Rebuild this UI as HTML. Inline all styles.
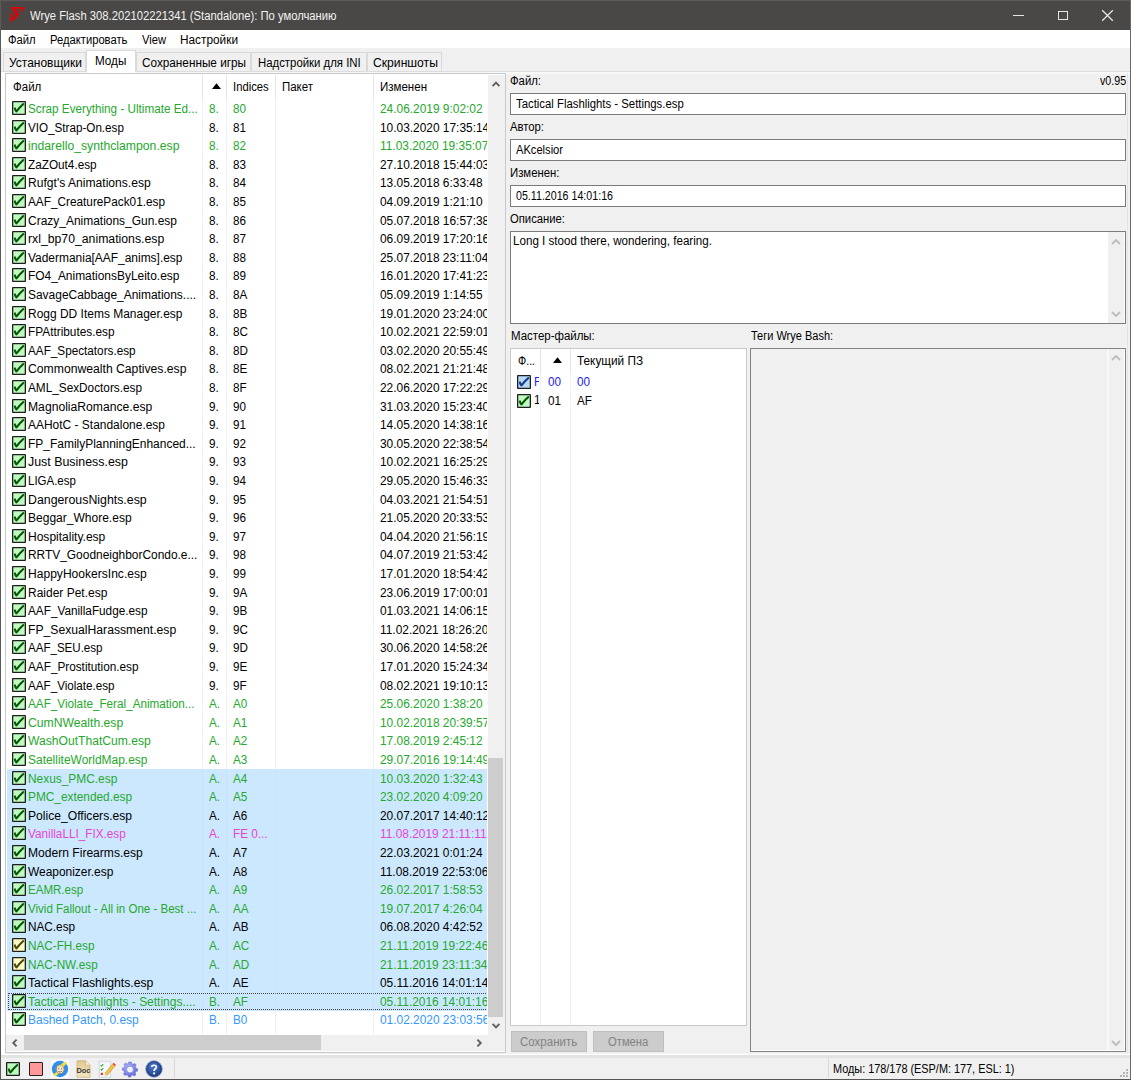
<!DOCTYPE html><html><head><meta charset="utf-8"><style>
*{margin:0;padding:0}
html,body{width:1131px;height:1080px;overflow:hidden;background:#f0f0f0}
body{position:relative;font-family:"Liberation Sans",sans-serif}
div,span,svg{position:absolute}
.t{white-space:pre;transform-origin:0 0;display:block}
.r{font-size:12.5px;line-height:14px;transform:scaleX(0.935)}
.d{transform:scaleX(0.952)}
.c1{width:16.3px;overflow:hidden}
</style></head><body><div style="left:0px;top:0px;width:1131px;height:30px;background:#4a4846;"></div>
<div style="left:0px;top:0px;width:1131px;height:1px;background:#5c5a58;"></div>
<svg style="position:absolute;left:6px;top:4px" width="22" height="22" viewBox="0 0 22 22">
<path d="M5.2 3.1 L17.8 3.0 Q18.7 3.5 18 5.4 L15.4 7.9 L14.4 7.6 L15.3 4.8 L9.8 4.8 L12.9 9.6 Q13.5 11.2 12.2 12.4 L5.6 17.9 L4.5 17 L4.5 9.1 L5.5 8.8 L7.3 12.6 Q8.1 13.6 9.1 12.9 Q9.9 12 9.2 10.9 L6.3 5.3 L5.1 4.4 Z" fill="#d40808"/></svg>
<span id="t0" class="t " style="left:29.5px;top:9.84px;font-size:12px;line-height:13.8px;color:#f2f2f2;transform:scaleX(0.9370);">Wrye Flash 308.202102221341 (Standalone): По умолчанию</span>
<div style="left:1013px;top:14.5px;width:11px;height:1.2px;background:#e6e6e6;"></div>
<div style="left:1057.5px;top:10.5px;width:10px;height:9.5px;border:1.2px solid #e6e6e6;box-sizing:border-box;"></div>
<svg style="position:absolute;left:1101px;top:9px" width="13" height="13" viewBox="0 0 13 13"><path d="M1.2 1.2 L11.8 11.8 M11.8 1.2 L1.2 11.8" stroke="#e6e6e6" stroke-width="1.3"/></svg>
<div style="left:0px;top:0px;width:1px;height:1080px;background:#5a5a5a;"></div>
<div style="left:1130px;top:0px;width:1px;height:1080px;background:#6a6a6a;"></div>
<div style="left:0px;top:1079px;width:1131px;height:1px;background:#555555;"></div>
<div style="left:1px;top:30px;width:1129px;height:18px;background:#fff;"></div>
<span id="t1" class="t " style="left:8.4px;top:34.34px;font-size:12px;line-height:13.8px;color:#000;transform:scaleX(0.9351);">Файл</span>
<span id="t2" class="t " style="left:50.4px;top:34.34px;font-size:12px;line-height:13.8px;color:#000;transform:scaleX(0.9336);">Редактировать</span>
<span id="t3" class="t " style="left:142px;top:34.34px;font-size:12px;line-height:13.8px;color:#000;transform:scaleX(0.9303);">View</span>
<span id="t4" class="t " style="left:180px;top:34.34px;font-size:12px;line-height:13.8px;color:#000;transform:scaleX(0.9857);">Настройки</span>
<div style="left:1px;top:48px;width:1129px;height:1030px;background:#f0f0f0;"></div>
<div style="left:3px;top:52px;width:83px;height:19px;background:#f0f0f0;border:1px solid #d9d9d9;border-bottom:none;box-sizing:border-box;"></div>
<span id="t5" class="t " style="left:8.8px;top:56.94px;font-size:12px;line-height:13.8px;color:#000;transform:scaleX(0.9991);">Установщики</span>
<div style="left:136px;top:52px;width:115.4px;height:19px;background:#f0f0f0;border:1px solid #d9d9d9;border-bottom:none;box-sizing:border-box;"></div>
<span id="t6" class="t " style="left:141.6px;top:56.94px;font-size:12px;line-height:13.8px;color:#000;transform:scaleX(0.9800);">Сохраненные игры</span>
<div style="left:251.4px;top:52px;width:115.29999999999998px;height:19px;background:#f0f0f0;border:1px solid #d9d9d9;border-bottom:none;box-sizing:border-box;"></div>
<span id="t7" class="t " style="left:257.5px;top:56.94px;font-size:12px;line-height:13.8px;color:#000;transform:scaleX(0.9478);">Надстройки для INI</span>
<div style="left:366.7px;top:52px;width:75.30000000000001px;height:19px;background:#f0f0f0;border:1px solid #d9d9d9;border-bottom:none;box-sizing:border-box;"></div>
<span id="t8" class="t " style="left:373px;top:56.94px;font-size:12px;line-height:13.8px;color:#000;transform:scaleX(1.0128);">Скриншоты</span>
<div style="left:1px;top:71px;width:1129px;height:1px;background:#dcdcdc;"></div>
<div style="left:1px;top:72px;width:1129px;height:1.5px;background:#f8f8f8;"></div>
<div style="left:1px;top:72px;width:4px;height:982px;background:#fff;"></div>
<div style="left:86px;top:50px;width:50px;height:22px;background:#fff;border:1px solid #d9d9d9;border-bottom:none;box-sizing:border-box;"></div>
<div style="left:87px;top:71px;width:48px;height:2px;background:#fff;"></div>
<span id="t9" class="t " style="left:94.7px;top:54.94px;font-size:12px;line-height:13.8px;color:#000;transform:scaleX(0.9729);">Моды</span>
<div style="left:5px;top:73px;width:501px;height:979.5px;background:#fff;border:1px solid #c8c9ce;box-sizing:border-box;"></div>
<div style="left:202.4px;top:74.5px;width:1px;height:24.5px;background:#e5e5e5;"></div>
<div style="left:226.3px;top:74.5px;width:1px;height:24.5px;background:#e5e5e5;"></div>
<div style="left:275.3px;top:74.5px;width:1px;height:24.5px;background:#e5e5e5;"></div>
<div style="left:373.2px;top:74.5px;width:1px;height:24.5px;background:#e5e5e5;"></div>
<span id="t10" class="t " style="left:12.9px;top:80.64px;font-size:12px;line-height:13.8px;color:#000;transform:scaleX(0.9588);">Файл</span>
<svg style="position:absolute;left:211px;top:82px" width="11" height="8" viewBox="0 0 11 8"><path d="M1 7 L5.5 1.2 L10 7 Z" fill="#000"/></svg>
<span id="t11" class="t " style="left:233px;top:80.64px;font-size:12px;line-height:13.8px;color:#000;transform:scaleX(0.9387);">Indices</span>
<span id="t12" class="t " style="left:282px;top:80.64px;font-size:12px;line-height:13.8px;color:#000;transform:scaleX(0.9548);">Пакет</span>
<span id="t13" class="t " style="left:380px;top:80.64px;font-size:12px;line-height:13.8px;color:#000;transform:scaleX(0.9595);">Изменен</span>
<div style="left:6px;top:99px;width:481px;height:935px;overflow:hidden;">
<svg style="position:absolute;left:6px;top:2.00px" width="14" height="14" viewBox="0 0 14 14"><rect x="0.65" y="0.65" width="12.7" height="12.7" rx="0.3" fill="#c0fac0" stroke="#1e1e1e" stroke-width="1.3"/><path d="M2.9 7.4 Q3.4 9.4 4.5 10.4 Q7.5 6.6 11.3 3.1" fill="none" stroke="#005800" stroke-width="2.1" stroke-linecap="round" stroke-linejoin="round"/></svg>
<span id="t14" class="t r" style="left:22.3px;top:3.07px;color:#25a82d;transform:scaleX(0.9364);">Scrap Everything - Ultimate Ed...</span>
<span id="t15" class="t r c1" style="left:202.6px;top:3.07px;color:#25a82d;">8.</span>
<span id="t16" class="t r" style="left:226.8px;top:3.07px;color:#25a82d;">80</span>
<span id="t17" class="t r d" style="left:374px;top:3.07px;color:#25a82d;">24.06.2019 9:02:02</span>
<svg style="position:absolute;left:6px;top:20.60px" width="14" height="14" viewBox="0 0 14 14"><rect x="0.65" y="0.65" width="12.7" height="12.7" rx="0.3" fill="#c0fac0" stroke="#1e1e1e" stroke-width="1.3"/><path d="M2.9 7.4 Q3.4 9.4 4.5 10.4 Q7.5 6.6 11.3 3.1" fill="none" stroke="#005800" stroke-width="2.1" stroke-linecap="round" stroke-linejoin="round"/></svg>
<span id="t18" class="t r" style="left:22.3px;top:21.67px;color:#000;transform:scaleX(0.9326);">VIO_Strap-On.esp</span>
<span id="t19" class="t r c1" style="left:202.6px;top:21.67px;color:#000;">8.</span>
<span id="t20" class="t r" style="left:226.8px;top:21.67px;color:#000;">81</span>
<span id="t21" class="t r d" style="left:374px;top:21.67px;color:#000;">10.03.2020 17:35:14</span>
<svg style="position:absolute;left:6px;top:39.20px" width="14" height="14" viewBox="0 0 14 14"><rect x="0.65" y="0.65" width="12.7" height="12.7" rx="0.3" fill="#c0fac0" stroke="#1e1e1e" stroke-width="1.3"/><path d="M2.9 7.4 Q3.4 9.4 4.5 10.4 Q7.5 6.6 11.3 3.1" fill="none" stroke="#005800" stroke-width="2.1" stroke-linecap="round" stroke-linejoin="round"/></svg>
<span id="t22" class="t r" style="left:22.3px;top:40.27px;color:#25a82d;transform:scaleX(0.9776);">indarello_synthclampon.esp</span>
<span id="t23" class="t r c1" style="left:202.6px;top:40.27px;color:#25a82d;">8.</span>
<span id="t24" class="t r" style="left:226.8px;top:40.27px;color:#25a82d;">82</span>
<span id="t25" class="t r d" style="left:374px;top:40.27px;color:#25a82d;">11.03.2020 19:35:07</span>
<svg style="position:absolute;left:6px;top:57.80px" width="14" height="14" viewBox="0 0 14 14"><rect x="0.65" y="0.65" width="12.7" height="12.7" rx="0.3" fill="#c0fac0" stroke="#1e1e1e" stroke-width="1.3"/><path d="M2.9 7.4 Q3.4 9.4 4.5 10.4 Q7.5 6.6 11.3 3.1" fill="none" stroke="#005800" stroke-width="2.1" stroke-linecap="round" stroke-linejoin="round"/></svg>
<span id="t26" class="t r" style="left:22.3px;top:58.87px;color:#000;transform:scaleX(0.9403);">ZaZOut4.esp</span>
<span id="t27" class="t r c1" style="left:202.6px;top:58.87px;color:#000;">8.</span>
<span id="t28" class="t r" style="left:226.8px;top:58.87px;color:#000;">83</span>
<span id="t29" class="t r d" style="left:374px;top:58.87px;color:#000;">27.10.2018 15:44:03</span>
<svg style="position:absolute;left:6px;top:76.40px" width="14" height="14" viewBox="0 0 14 14"><rect x="0.65" y="0.65" width="12.7" height="12.7" rx="0.3" fill="#c0fac0" stroke="#1e1e1e" stroke-width="1.3"/><path d="M2.9 7.4 Q3.4 9.4 4.5 10.4 Q7.5 6.6 11.3 3.1" fill="none" stroke="#005800" stroke-width="2.1" stroke-linecap="round" stroke-linejoin="round"/></svg>
<span id="t30" class="t r" style="left:22.3px;top:77.47px;color:#000;transform:scaleX(0.9679);">Rufgt&#x27;s Animations.esp</span>
<span id="t31" class="t r c1" style="left:202.6px;top:77.47px;color:#000;">8.</span>
<span id="t32" class="t r" style="left:226.8px;top:77.47px;color:#000;">84</span>
<span id="t33" class="t r d" style="left:374px;top:77.47px;color:#000;">13.05.2018 6:33:48</span>
<svg style="position:absolute;left:6px;top:95.00px" width="14" height="14" viewBox="0 0 14 14"><rect x="0.65" y="0.65" width="12.7" height="12.7" rx="0.3" fill="#c0fac0" stroke="#1e1e1e" stroke-width="1.3"/><path d="M2.9 7.4 Q3.4 9.4 4.5 10.4 Q7.5 6.6 11.3 3.1" fill="none" stroke="#005800" stroke-width="2.1" stroke-linecap="round" stroke-linejoin="round"/></svg>
<span id="t34" class="t r" style="left:22.3px;top:96.07px;color:#000;transform:scaleX(0.9434);">AAF_CreaturePack01.esp</span>
<span id="t35" class="t r c1" style="left:202.6px;top:96.07px;color:#000;">8.</span>
<span id="t36" class="t r" style="left:226.8px;top:96.07px;color:#000;">85</span>
<span id="t37" class="t r d" style="left:374px;top:96.07px;color:#000;">04.09.2019 1:21:10</span>
<svg style="position:absolute;left:6px;top:113.60px" width="14" height="14" viewBox="0 0 14 14"><rect x="0.65" y="0.65" width="12.7" height="12.7" rx="0.3" fill="#c0fac0" stroke="#1e1e1e" stroke-width="1.3"/><path d="M2.9 7.4 Q3.4 9.4 4.5 10.4 Q7.5 6.6 11.3 3.1" fill="none" stroke="#005800" stroke-width="2.1" stroke-linecap="round" stroke-linejoin="round"/></svg>
<span id="t38" class="t r" style="left:22.3px;top:114.67px;color:#000;transform:scaleX(0.9573);">Crazy_Animations_Gun.esp</span>
<span id="t39" class="t r c1" style="left:202.6px;top:114.67px;color:#000;">8.</span>
<span id="t40" class="t r" style="left:226.8px;top:114.67px;color:#000;">86</span>
<span id="t41" class="t r d" style="left:374px;top:114.67px;color:#000;">05.07.2018 16:57:38</span>
<svg style="position:absolute;left:6px;top:132.20px" width="14" height="14" viewBox="0 0 14 14"><rect x="0.65" y="0.65" width="12.7" height="12.7" rx="0.3" fill="#c0fac0" stroke="#1e1e1e" stroke-width="1.3"/><path d="M2.9 7.4 Q3.4 9.4 4.5 10.4 Q7.5 6.6 11.3 3.1" fill="none" stroke="#005800" stroke-width="2.1" stroke-linecap="round" stroke-linejoin="round"/></svg>
<span id="t42" class="t r" style="left:22.3px;top:133.27px;color:#000;transform:scaleX(0.9800);">rxl_bp70_animations.esp</span>
<span id="t43" class="t r c1" style="left:202.6px;top:133.27px;color:#000;">8.</span>
<span id="t44" class="t r" style="left:226.8px;top:133.27px;color:#000;">87</span>
<span id="t45" class="t r d" style="left:374px;top:133.27px;color:#000;">06.09.2019 17:20:16</span>
<svg style="position:absolute;left:6px;top:150.80px" width="14" height="14" viewBox="0 0 14 14"><rect x="0.65" y="0.65" width="12.7" height="12.7" rx="0.3" fill="#c0fac0" stroke="#1e1e1e" stroke-width="1.3"/><path d="M2.9 7.4 Q3.4 9.4 4.5 10.4 Q7.5 6.6 11.3 3.1" fill="none" stroke="#005800" stroke-width="2.1" stroke-linecap="round" stroke-linejoin="round"/></svg>
<span id="t46" class="t r" style="left:22.3px;top:151.87px;color:#000;transform:scaleX(0.9557);">Vadermania[AAF_anims].esp</span>
<span id="t47" class="t r c1" style="left:202.6px;top:151.87px;color:#000;">8.</span>
<span id="t48" class="t r" style="left:226.8px;top:151.87px;color:#000;">88</span>
<span id="t49" class="t r d" style="left:374px;top:151.87px;color:#000;">25.07.2018 23:11:04</span>
<svg style="position:absolute;left:6px;top:169.40px" width="14" height="14" viewBox="0 0 14 14"><rect x="0.65" y="0.65" width="12.7" height="12.7" rx="0.3" fill="#c0fac0" stroke="#1e1e1e" stroke-width="1.3"/><path d="M2.9 7.4 Q3.4 9.4 4.5 10.4 Q7.5 6.6 11.3 3.1" fill="none" stroke="#005800" stroke-width="2.1" stroke-linecap="round" stroke-linejoin="round"/></svg>
<span id="t50" class="t r" style="left:22.3px;top:170.47px;color:#000;transform:scaleX(0.9557);">FO4_AnimationsByLeito.esp</span>
<span id="t51" class="t r c1" style="left:202.6px;top:170.47px;color:#000;">8.</span>
<span id="t52" class="t r" style="left:226.8px;top:170.47px;color:#000;">89</span>
<span id="t53" class="t r d" style="left:374px;top:170.47px;color:#000;">16.01.2020 17:41:23</span>
<svg style="position:absolute;left:6px;top:188.00px" width="14" height="14" viewBox="0 0 14 14"><rect x="0.65" y="0.65" width="12.7" height="12.7" rx="0.3" fill="#c0fac0" stroke="#1e1e1e" stroke-width="1.3"/><path d="M2.9 7.4 Q3.4 9.4 4.5 10.4 Q7.5 6.6 11.3 3.1" fill="none" stroke="#005800" stroke-width="2.1" stroke-linecap="round" stroke-linejoin="round"/></svg>
<span id="t54" class="t r" style="left:22.3px;top:189.07px;color:#000;transform:scaleX(0.9561);">SavageCabbage_Animations....</span>
<span id="t55" class="t r c1" style="left:202.6px;top:189.07px;color:#000;">8.</span>
<span id="t56" class="t r" style="left:226.8px;top:189.07px;color:#000;">8A</span>
<span id="t57" class="t r d" style="left:374px;top:189.07px;color:#000;">05.09.2019 1:14:55</span>
<svg style="position:absolute;left:6px;top:206.60px" width="14" height="14" viewBox="0 0 14 14"><rect x="0.65" y="0.65" width="12.7" height="12.7" rx="0.3" fill="#c0fac0" stroke="#1e1e1e" stroke-width="1.3"/><path d="M2.9 7.4 Q3.4 9.4 4.5 10.4 Q7.5 6.6 11.3 3.1" fill="none" stroke="#005800" stroke-width="2.1" stroke-linecap="round" stroke-linejoin="round"/></svg>
<span id="t58" class="t r" style="left:22.3px;top:207.67px;color:#000;transform:scaleX(0.9584);">Rogg DD Items Manager.esp</span>
<span id="t59" class="t r c1" style="left:202.6px;top:207.67px;color:#000;">8.</span>
<span id="t60" class="t r" style="left:226.8px;top:207.67px;color:#000;">8B</span>
<span id="t61" class="t r d" style="left:374px;top:207.67px;color:#000;">19.01.2020 23:24:00</span>
<svg style="position:absolute;left:6px;top:225.20px" width="14" height="14" viewBox="0 0 14 14"><rect x="0.65" y="0.65" width="12.7" height="12.7" rx="0.3" fill="#c0fac0" stroke="#1e1e1e" stroke-width="1.3"/><path d="M2.9 7.4 Q3.4 9.4 4.5 10.4 Q7.5 6.6 11.3 3.1" fill="none" stroke="#005800" stroke-width="2.1" stroke-linecap="round" stroke-linejoin="round"/></svg>
<span id="t62" class="t r" style="left:22.3px;top:226.27px;color:#000;transform:scaleX(0.9466);">FPAttributes.esp</span>
<span id="t63" class="t r c1" style="left:202.6px;top:226.27px;color:#000;">8.</span>
<span id="t64" class="t r" style="left:226.8px;top:226.27px;color:#000;">8C</span>
<span id="t65" class="t r d" style="left:374px;top:226.27px;color:#000;">10.02.2021 22:59:01</span>
<svg style="position:absolute;left:6px;top:243.80px" width="14" height="14" viewBox="0 0 14 14"><rect x="0.65" y="0.65" width="12.7" height="12.7" rx="0.3" fill="#c0fac0" stroke="#1e1e1e" stroke-width="1.3"/><path d="M2.9 7.4 Q3.4 9.4 4.5 10.4 Q7.5 6.6 11.3 3.1" fill="none" stroke="#005800" stroke-width="2.1" stroke-linecap="round" stroke-linejoin="round"/></svg>
<span id="t66" class="t r" style="left:22.3px;top:244.87px;color:#000;transform:scaleX(0.9385);">AAF_Spectators.esp</span>
<span id="t67" class="t r c1" style="left:202.6px;top:244.87px;color:#000;">8.</span>
<span id="t68" class="t r" style="left:226.8px;top:244.87px;color:#000;">8D</span>
<span id="t69" class="t r d" style="left:374px;top:244.87px;color:#000;">03.02.2020 20:55:49</span>
<svg style="position:absolute;left:6px;top:262.40px" width="14" height="14" viewBox="0 0 14 14"><rect x="0.65" y="0.65" width="12.7" height="12.7" rx="0.3" fill="#c0fac0" stroke="#1e1e1e" stroke-width="1.3"/><path d="M2.9 7.4 Q3.4 9.4 4.5 10.4 Q7.5 6.6 11.3 3.1" fill="none" stroke="#005800" stroke-width="2.1" stroke-linecap="round" stroke-linejoin="round"/></svg>
<span id="t70" class="t r" style="left:22.3px;top:263.47px;color:#000;transform:scaleX(0.9749);">Commonwealth Captives.esp</span>
<span id="t71" class="t r c1" style="left:202.6px;top:263.47px;color:#000;">8.</span>
<span id="t72" class="t r" style="left:226.8px;top:263.47px;color:#000;">8E</span>
<span id="t73" class="t r d" style="left:374px;top:263.47px;color:#000;">08.02.2021 21:21:48</span>
<svg style="position:absolute;left:6px;top:281.00px" width="14" height="14" viewBox="0 0 14 14"><rect x="0.65" y="0.65" width="12.7" height="12.7" rx="0.3" fill="#c0fac0" stroke="#1e1e1e" stroke-width="1.3"/><path d="M2.9 7.4 Q3.4 9.4 4.5 10.4 Q7.5 6.6 11.3 3.1" fill="none" stroke="#005800" stroke-width="2.1" stroke-linecap="round" stroke-linejoin="round"/></svg>
<span id="t74" class="t r" style="left:22.3px;top:282.07px;color:#000;transform:scaleX(0.9430);">AML_SexDoctors.esp</span>
<span id="t75" class="t r c1" style="left:202.6px;top:282.07px;color:#000;">8.</span>
<span id="t76" class="t r" style="left:226.8px;top:282.07px;color:#000;">8F</span>
<span id="t77" class="t r d" style="left:374px;top:282.07px;color:#000;">22.06.2020 17:22:29</span>
<svg style="position:absolute;left:6px;top:299.60px" width="14" height="14" viewBox="0 0 14 14"><rect x="0.65" y="0.65" width="12.7" height="12.7" rx="0.3" fill="#c0fac0" stroke="#1e1e1e" stroke-width="1.3"/><path d="M2.9 7.4 Q3.4 9.4 4.5 10.4 Q7.5 6.6 11.3 3.1" fill="none" stroke="#005800" stroke-width="2.1" stroke-linecap="round" stroke-linejoin="round"/></svg>
<span id="t78" class="t r" style="left:22.3px;top:300.67px;color:#000;transform:scaleX(0.9722);">MagnoliaRomance.esp</span>
<span id="t79" class="t r c1" style="left:202.6px;top:300.67px;color:#000;">9.</span>
<span id="t80" class="t r" style="left:226.8px;top:300.67px;color:#000;">90</span>
<span id="t81" class="t r d" style="left:374px;top:300.67px;color:#000;">31.03.2020 15:23:40</span>
<svg style="position:absolute;left:6px;top:318.20px" width="14" height="14" viewBox="0 0 14 14"><rect x="0.65" y="0.65" width="12.7" height="12.7" rx="0.3" fill="#c0fac0" stroke="#1e1e1e" stroke-width="1.3"/><path d="M2.9 7.4 Q3.4 9.4 4.5 10.4 Q7.5 6.6 11.3 3.1" fill="none" stroke="#005800" stroke-width="2.1" stroke-linecap="round" stroke-linejoin="round"/></svg>
<span id="t82" class="t r" style="left:22.3px;top:319.27px;color:#000;transform:scaleX(0.9571);">AAHotC - Standalone.esp</span>
<span id="t83" class="t r c1" style="left:202.6px;top:319.27px;color:#000;">9.</span>
<span id="t84" class="t r" style="left:226.8px;top:319.27px;color:#000;">91</span>
<span id="t85" class="t r d" style="left:374px;top:319.27px;color:#000;">14.05.2020 14:38:16</span>
<svg style="position:absolute;left:6px;top:336.80px" width="14" height="14" viewBox="0 0 14 14"><rect x="0.65" y="0.65" width="12.7" height="12.7" rx="0.3" fill="#c0fac0" stroke="#1e1e1e" stroke-width="1.3"/><path d="M2.9 7.4 Q3.4 9.4 4.5 10.4 Q7.5 6.6 11.3 3.1" fill="none" stroke="#005800" stroke-width="2.1" stroke-linecap="round" stroke-linejoin="round"/></svg>
<span id="t86" class="t r" style="left:22.3px;top:337.87px;color:#000;transform:scaleX(0.9577);">FP_FamilyPlanningEnhanced...</span>
<span id="t87" class="t r c1" style="left:202.6px;top:337.87px;color:#000;">9.</span>
<span id="t88" class="t r" style="left:226.8px;top:337.87px;color:#000;">92</span>
<span id="t89" class="t r d" style="left:374px;top:337.87px;color:#000;">30.05.2020 22:38:54</span>
<svg style="position:absolute;left:6px;top:355.40px" width="14" height="14" viewBox="0 0 14 14"><rect x="0.65" y="0.65" width="12.7" height="12.7" rx="0.3" fill="#c0fac0" stroke="#1e1e1e" stroke-width="1.3"/><path d="M2.9 7.4 Q3.4 9.4 4.5 10.4 Q7.5 6.6 11.3 3.1" fill="none" stroke="#005800" stroke-width="2.1" stroke-linecap="round" stroke-linejoin="round"/></svg>
<span id="t90" class="t r" style="left:22.3px;top:356.47px;color:#000;transform:scaleX(0.9916);">Just Business.esp</span>
<span id="t91" class="t r c1" style="left:202.6px;top:356.47px;color:#000;">9.</span>
<span id="t92" class="t r" style="left:226.8px;top:356.47px;color:#000;">93</span>
<span id="t93" class="t r d" style="left:374px;top:356.47px;color:#000;">10.02.2021 16:25:29</span>
<svg style="position:absolute;left:6px;top:374.00px" width="14" height="14" viewBox="0 0 14 14"><rect x="0.65" y="0.65" width="12.7" height="12.7" rx="0.3" fill="#c0fac0" stroke="#1e1e1e" stroke-width="1.3"/><path d="M2.9 7.4 Q3.4 9.4 4.5 10.4 Q7.5 6.6 11.3 3.1" fill="none" stroke="#005800" stroke-width="2.1" stroke-linecap="round" stroke-linejoin="round"/></svg>
<span id="t94" class="t r" style="left:22.3px;top:375.07px;color:#000;transform:scaleX(0.9189);">LIGA.esp</span>
<span id="t95" class="t r c1" style="left:202.6px;top:375.07px;color:#000;">9.</span>
<span id="t96" class="t r" style="left:226.8px;top:375.07px;color:#000;">94</span>
<span id="t97" class="t r d" style="left:374px;top:375.07px;color:#000;">29.05.2020 15:46:33</span>
<svg style="position:absolute;left:6px;top:392.60px" width="14" height="14" viewBox="0 0 14 14"><rect x="0.65" y="0.65" width="12.7" height="12.7" rx="0.3" fill="#c0fac0" stroke="#1e1e1e" stroke-width="1.3"/><path d="M2.9 7.4 Q3.4 9.4 4.5 10.4 Q7.5 6.6 11.3 3.1" fill="none" stroke="#005800" stroke-width="2.1" stroke-linecap="round" stroke-linejoin="round"/></svg>
<span id="t98" class="t r" style="left:22.3px;top:393.67px;color:#000;transform:scaleX(0.9874);">DangerousNights.esp</span>
<span id="t99" class="t r c1" style="left:202.6px;top:393.67px;color:#000;">9.</span>
<span id="t100" class="t r" style="left:226.8px;top:393.67px;color:#000;">95</span>
<span id="t101" class="t r d" style="left:374px;top:393.67px;color:#000;">04.03.2021 21:54:51</span>
<svg style="position:absolute;left:6px;top:411.20px" width="14" height="14" viewBox="0 0 14 14"><rect x="0.65" y="0.65" width="12.7" height="12.7" rx="0.3" fill="#c0fac0" stroke="#1e1e1e" stroke-width="1.3"/><path d="M2.9 7.4 Q3.4 9.4 4.5 10.4 Q7.5 6.6 11.3 3.1" fill="none" stroke="#005800" stroke-width="2.1" stroke-linecap="round" stroke-linejoin="round"/></svg>
<span id="t102" class="t r" style="left:22.3px;top:412.27px;color:#000;transform:scaleX(0.9619);">Beggar_Whore.esp</span>
<span id="t103" class="t r c1" style="left:202.6px;top:412.27px;color:#000;">9.</span>
<span id="t104" class="t r" style="left:226.8px;top:412.27px;color:#000;">96</span>
<span id="t105" class="t r d" style="left:374px;top:412.27px;color:#000;">21.05.2020 20:33:53</span>
<svg style="position:absolute;left:6px;top:429.80px" width="14" height="14" viewBox="0 0 14 14"><rect x="0.65" y="0.65" width="12.7" height="12.7" rx="0.3" fill="#c0fac0" stroke="#1e1e1e" stroke-width="1.3"/><path d="M2.9 7.4 Q3.4 9.4 4.5 10.4 Q7.5 6.6 11.3 3.1" fill="none" stroke="#005800" stroke-width="2.1" stroke-linecap="round" stroke-linejoin="round"/></svg>
<span id="t106" class="t r" style="left:22.3px;top:430.87px;color:#000;transform:scaleX(0.9619);">Hospitality.esp</span>
<span id="t107" class="t r c1" style="left:202.6px;top:430.87px;color:#000;">9.</span>
<span id="t108" class="t r" style="left:226.8px;top:430.87px;color:#000;">97</span>
<span id="t109" class="t r d" style="left:374px;top:430.87px;color:#000;">04.04.2020 21:56:19</span>
<svg style="position:absolute;left:6px;top:448.40px" width="14" height="14" viewBox="0 0 14 14"><rect x="0.65" y="0.65" width="12.7" height="12.7" rx="0.3" fill="#c0fac0" stroke="#1e1e1e" stroke-width="1.3"/><path d="M2.9 7.4 Q3.4 9.4 4.5 10.4 Q7.5 6.6 11.3 3.1" fill="none" stroke="#005800" stroke-width="2.1" stroke-linecap="round" stroke-linejoin="round"/></svg>
<span id="t110" class="t r" style="left:22.3px;top:449.47px;color:#000;transform:scaleX(0.9534);">RRTV_GoodneighborCondo.e...</span>
<span id="t111" class="t r c1" style="left:202.6px;top:449.47px;color:#000;">9.</span>
<span id="t112" class="t r" style="left:226.8px;top:449.47px;color:#000;">98</span>
<span id="t113" class="t r d" style="left:374px;top:449.47px;color:#000;">04.07.2019 21:53:42</span>
<svg style="position:absolute;left:6px;top:467.00px" width="14" height="14" viewBox="0 0 14 14"><rect x="0.65" y="0.65" width="12.7" height="12.7" rx="0.3" fill="#c0fac0" stroke="#1e1e1e" stroke-width="1.3"/><path d="M2.9 7.4 Q3.4 9.4 4.5 10.4 Q7.5 6.6 11.3 3.1" fill="none" stroke="#005800" stroke-width="2.1" stroke-linecap="round" stroke-linejoin="round"/></svg>
<span id="t114" class="t r" style="left:22.3px;top:468.07px;color:#000;transform:scaleX(0.9652);">HappyHookersInc.esp</span>
<span id="t115" class="t r c1" style="left:202.6px;top:468.07px;color:#000;">9.</span>
<span id="t116" class="t r" style="left:226.8px;top:468.07px;color:#000;">99</span>
<span id="t117" class="t r d" style="left:374px;top:468.07px;color:#000;">17.01.2020 18:54:42</span>
<svg style="position:absolute;left:6px;top:485.60px" width="14" height="14" viewBox="0 0 14 14"><rect x="0.65" y="0.65" width="12.7" height="12.7" rx="0.3" fill="#c0fac0" stroke="#1e1e1e" stroke-width="1.3"/><path d="M2.9 7.4 Q3.4 9.4 4.5 10.4 Q7.5 6.6 11.3 3.1" fill="none" stroke="#005800" stroke-width="2.1" stroke-linecap="round" stroke-linejoin="round"/></svg>
<span id="t118" class="t r" style="left:22.3px;top:486.67px;color:#000;transform:scaleX(0.9590);">Raider Pet.esp</span>
<span id="t119" class="t r c1" style="left:202.6px;top:486.67px;color:#000;">9.</span>
<span id="t120" class="t r" style="left:226.8px;top:486.67px;color:#000;">9A</span>
<span id="t121" class="t r d" style="left:374px;top:486.67px;color:#000;">23.06.2019 17:00:01</span>
<svg style="position:absolute;left:6px;top:504.20px" width="14" height="14" viewBox="0 0 14 14"><rect x="0.65" y="0.65" width="12.7" height="12.7" rx="0.3" fill="#c0fac0" stroke="#1e1e1e" stroke-width="1.3"/><path d="M2.9 7.4 Q3.4 9.4 4.5 10.4 Q7.5 6.6 11.3 3.1" fill="none" stroke="#005800" stroke-width="2.1" stroke-linecap="round" stroke-linejoin="round"/></svg>
<span id="t122" class="t r" style="left:22.3px;top:505.27px;color:#000;transform:scaleX(0.9414);">AAF_VanillaFudge.esp</span>
<span id="t123" class="t r c1" style="left:202.6px;top:505.27px;color:#000;">9.</span>
<span id="t124" class="t r" style="left:226.8px;top:505.27px;color:#000;">9B</span>
<span id="t125" class="t r d" style="left:374px;top:505.27px;color:#000;">01.03.2021 14:06:15</span>
<svg style="position:absolute;left:6px;top:522.80px" width="14" height="14" viewBox="0 0 14 14"><rect x="0.65" y="0.65" width="12.7" height="12.7" rx="0.3" fill="#c0fac0" stroke="#1e1e1e" stroke-width="1.3"/><path d="M2.9 7.4 Q3.4 9.4 4.5 10.4 Q7.5 6.6 11.3 3.1" fill="none" stroke="#005800" stroke-width="2.1" stroke-linecap="round" stroke-linejoin="round"/></svg>
<span id="t126" class="t r" style="left:22.3px;top:523.87px;color:#000;transform:scaleX(0.9740);">FP_SexualHarassment.esp</span>
<span id="t127" class="t r c1" style="left:202.6px;top:523.87px;color:#000;">9.</span>
<span id="t128" class="t r" style="left:226.8px;top:523.87px;color:#000;">9C</span>
<span id="t129" class="t r d" style="left:374px;top:523.87px;color:#000;">11.02.2021 18:26:20</span>
<svg style="position:absolute;left:6px;top:541.40px" width="14" height="14" viewBox="0 0 14 14"><rect x="0.65" y="0.65" width="12.7" height="12.7" rx="0.3" fill="#c0fac0" stroke="#1e1e1e" stroke-width="1.3"/><path d="M2.9 7.4 Q3.4 9.4 4.5 10.4 Q7.5 6.6 11.3 3.1" fill="none" stroke="#005800" stroke-width="2.1" stroke-linecap="round" stroke-linejoin="round"/></svg>
<span id="t130" class="t r" style="left:22.3px;top:542.47px;color:#000;transform:scaleX(0.9244);">AAF_SEU.esp</span>
<span id="t131" class="t r c1" style="left:202.6px;top:542.47px;color:#000;">9.</span>
<span id="t132" class="t r" style="left:226.8px;top:542.47px;color:#000;">9D</span>
<span id="t133" class="t r d" style="left:374px;top:542.47px;color:#000;">30.06.2020 14:58:26</span>
<svg style="position:absolute;left:6px;top:560.00px" width="14" height="14" viewBox="0 0 14 14"><rect x="0.65" y="0.65" width="12.7" height="12.7" rx="0.3" fill="#c0fac0" stroke="#1e1e1e" stroke-width="1.3"/><path d="M2.9 7.4 Q3.4 9.4 4.5 10.4 Q7.5 6.6 11.3 3.1" fill="none" stroke="#005800" stroke-width="2.1" stroke-linecap="round" stroke-linejoin="round"/></svg>
<span id="t134" class="t r" style="left:22.3px;top:561.07px;color:#000;transform:scaleX(0.9411);">AAF_Prostitution.esp</span>
<span id="t135" class="t r c1" style="left:202.6px;top:561.07px;color:#000;">9.</span>
<span id="t136" class="t r" style="left:226.8px;top:561.07px;color:#000;">9E</span>
<span id="t137" class="t r d" style="left:374px;top:561.07px;color:#000;">17.01.2020 15:24:34</span>
<svg style="position:absolute;left:6px;top:578.60px" width="14" height="14" viewBox="0 0 14 14"><rect x="0.65" y="0.65" width="12.7" height="12.7" rx="0.3" fill="#c0fac0" stroke="#1e1e1e" stroke-width="1.3"/><path d="M2.9 7.4 Q3.4 9.4 4.5 10.4 Q7.5 6.6 11.3 3.1" fill="none" stroke="#005800" stroke-width="2.1" stroke-linecap="round" stroke-linejoin="round"/></svg>
<span id="t138" class="t r" style="left:22.3px;top:579.67px;color:#000;transform:scaleX(0.9323);">AAF_Violate.esp</span>
<span id="t139" class="t r c1" style="left:202.6px;top:579.67px;color:#000;">9.</span>
<span id="t140" class="t r" style="left:226.8px;top:579.67px;color:#000;">9F</span>
<span id="t141" class="t r d" style="left:374px;top:579.67px;color:#000;">08.02.2021 19:10:13</span>
<svg style="position:absolute;left:6px;top:597.20px" width="14" height="14" viewBox="0 0 14 14"><rect x="0.65" y="0.65" width="12.7" height="12.7" rx="0.3" fill="#c0fac0" stroke="#1e1e1e" stroke-width="1.3"/><path d="M2.9 7.4 Q3.4 9.4 4.5 10.4 Q7.5 6.6 11.3 3.1" fill="none" stroke="#005800" stroke-width="2.1" stroke-linecap="round" stroke-linejoin="round"/></svg>
<span id="t142" class="t r" style="left:22.3px;top:598.27px;color:#25a82d;transform:scaleX(0.9372);">AAF_Violate_Feral_Animation...</span>
<span id="t143" class="t r c1" style="left:202.6px;top:598.27px;color:#25a82d;">A.</span>
<span id="t144" class="t r" style="left:226.8px;top:598.27px;color:#25a82d;">A0</span>
<span id="t145" class="t r d" style="left:374px;top:598.27px;color:#25a82d;">25.06.2020 1:38:20</span>
<svg style="position:absolute;left:6px;top:615.80px" width="14" height="14" viewBox="0 0 14 14"><rect x="0.65" y="0.65" width="12.7" height="12.7" rx="0.3" fill="#c0fac0" stroke="#1e1e1e" stroke-width="1.3"/><path d="M2.9 7.4 Q3.4 9.4 4.5 10.4 Q7.5 6.6 11.3 3.1" fill="none" stroke="#005800" stroke-width="2.1" stroke-linecap="round" stroke-linejoin="round"/></svg>
<span id="t146" class="t r" style="left:22.3px;top:616.87px;color:#25a82d;transform:scaleX(0.9741);">CumNWealth.esp</span>
<span id="t147" class="t r c1" style="left:202.6px;top:616.87px;color:#25a82d;">A.</span>
<span id="t148" class="t r" style="left:226.8px;top:616.87px;color:#25a82d;">A1</span>
<span id="t149" class="t r d" style="left:374px;top:616.87px;color:#25a82d;">10.02.2018 20:39:57</span>
<svg style="position:absolute;left:6px;top:634.40px" width="14" height="14" viewBox="0 0 14 14"><rect x="0.65" y="0.65" width="12.7" height="12.7" rx="0.3" fill="#c0fac0" stroke="#1e1e1e" stroke-width="1.3"/><path d="M2.9 7.4 Q3.4 9.4 4.5 10.4 Q7.5 6.6 11.3 3.1" fill="none" stroke="#005800" stroke-width="2.1" stroke-linecap="round" stroke-linejoin="round"/></svg>
<span id="t150" class="t r" style="left:22.3px;top:635.47px;color:#25a82d;transform:scaleX(0.9686);">WashOutThatCum.esp</span>
<span id="t151" class="t r c1" style="left:202.6px;top:635.47px;color:#25a82d;">A.</span>
<span id="t152" class="t r" style="left:226.8px;top:635.47px;color:#25a82d;">A2</span>
<span id="t153" class="t r d" style="left:374px;top:635.47px;color:#25a82d;">17.08.2019 2:45:12</span>
<svg style="position:absolute;left:6px;top:653.00px" width="14" height="14" viewBox="0 0 14 14"><rect x="0.65" y="0.65" width="12.7" height="12.7" rx="0.3" fill="#c0fac0" stroke="#1e1e1e" stroke-width="1.3"/><path d="M2.9 7.4 Q3.4 9.4 4.5 10.4 Q7.5 6.6 11.3 3.1" fill="none" stroke="#005800" stroke-width="2.1" stroke-linecap="round" stroke-linejoin="round"/></svg>
<span id="t154" class="t r" style="left:22.3px;top:654.07px;color:#25a82d;transform:scaleX(0.9572);">SatelliteWorldMap.esp</span>
<span id="t155" class="t r c1" style="left:202.6px;top:654.07px;color:#25a82d;">A.</span>
<span id="t156" class="t r" style="left:226.8px;top:654.07px;color:#25a82d;">A3</span>
<span id="t157" class="t r d" style="left:374px;top:654.07px;color:#25a82d;">29.07.2016 19:14:49</span>
<div style="left:1px;top:670.10px;width:481px;height:241.80px;background:#cce8ff;"></div>
<svg style="position:absolute;left:6px;top:671.60px" width="14" height="14" viewBox="0 0 14 14"><rect x="0.65" y="0.65" width="12.7" height="12.7" rx="0.3" fill="#c0fac0" stroke="#1e1e1e" stroke-width="1.3"/><path d="M2.9 7.4 Q3.4 9.4 4.5 10.4 Q7.5 6.6 11.3 3.1" fill="none" stroke="#005800" stroke-width="2.1" stroke-linecap="round" stroke-linejoin="round"/></svg>
<span id="t158" class="t r" style="left:22.3px;top:672.67px;color:#25a82d;transform:scaleX(0.9521);">Nexus_PMC.esp</span>
<span id="t159" class="t r c1" style="left:202.6px;top:672.67px;color:#25a82d;">A.</span>
<span id="t160" class="t r" style="left:226.8px;top:672.67px;color:#25a82d;">A4</span>
<span id="t161" class="t r d" style="left:374px;top:672.67px;color:#25a82d;">10.03.2020 1:32:43</span>
<svg style="position:absolute;left:6px;top:690.20px" width="14" height="14" viewBox="0 0 14 14"><rect x="0.65" y="0.65" width="12.7" height="12.7" rx="0.3" fill="#c0fac0" stroke="#1e1e1e" stroke-width="1.3"/><path d="M2.9 7.4 Q3.4 9.4 4.5 10.4 Q7.5 6.6 11.3 3.1" fill="none" stroke="#005800" stroke-width="2.1" stroke-linecap="round" stroke-linejoin="round"/></svg>
<span id="t162" class="t r" style="left:22.3px;top:691.27px;color:#25a82d;transform:scaleX(0.9481);">PMC_extended.esp</span>
<span id="t163" class="t r c1" style="left:202.6px;top:691.27px;color:#25a82d;">A.</span>
<span id="t164" class="t r" style="left:226.8px;top:691.27px;color:#25a82d;">A5</span>
<span id="t165" class="t r d" style="left:374px;top:691.27px;color:#25a82d;">23.02.2020 4:09:20</span>
<svg style="position:absolute;left:6px;top:708.80px" width="14" height="14" viewBox="0 0 14 14"><rect x="0.65" y="0.65" width="12.7" height="12.7" rx="0.3" fill="#c0fac0" stroke="#1e1e1e" stroke-width="1.3"/><path d="M2.9 7.4 Q3.4 9.4 4.5 10.4 Q7.5 6.6 11.3 3.1" fill="none" stroke="#005800" stroke-width="2.1" stroke-linecap="round" stroke-linejoin="round"/></svg>
<span id="t166" class="t r" style="left:22.3px;top:709.87px;color:#000;transform:scaleX(0.9687);">Police_Officers.esp</span>
<span id="t167" class="t r c1" style="left:202.6px;top:709.87px;color:#000;">A.</span>
<span id="t168" class="t r" style="left:226.8px;top:709.87px;color:#000;">A6</span>
<span id="t169" class="t r d" style="left:374px;top:709.87px;color:#000;">20.07.2017 14:40:12</span>
<svg style="position:absolute;left:6px;top:727.40px" width="14" height="14" viewBox="0 0 14 14"><rect x="0.65" y="0.65" width="12.7" height="12.7" rx="0.3" fill="#c0fac0" stroke="#1e1e1e" stroke-width="1.3"/><path d="M2.9 7.4 Q3.4 9.4 4.5 10.4 Q7.5 6.6 11.3 3.1" fill="none" stroke="#005800" stroke-width="2.1" stroke-linecap="round" stroke-linejoin="round"/></svg>
<span id="t170" class="t r" style="left:22.3px;top:728.47px;color:#e444d8;transform:scaleX(0.9394);">VanillaLLI_FIX.esp</span>
<span id="t171" class="t r c1" style="left:202.6px;top:728.47px;color:#e444d8;">A.</span>
<span id="t172" class="t r" style="left:226.8px;top:728.47px;color:#e444d8;">FE 0...</span>
<span id="t173" class="t r d" style="left:374px;top:728.47px;color:#e444d8;">11.08.2019 21:11:11</span>
<svg style="position:absolute;left:6px;top:746.00px" width="14" height="14" viewBox="0 0 14 14"><rect x="0.65" y="0.65" width="12.7" height="12.7" rx="0.3" fill="#c0fac0" stroke="#1e1e1e" stroke-width="1.3"/><path d="M2.9 7.4 Q3.4 9.4 4.5 10.4 Q7.5 6.6 11.3 3.1" fill="none" stroke="#005800" stroke-width="2.1" stroke-linecap="round" stroke-linejoin="round"/></svg>
<span id="t174" class="t r" style="left:22.3px;top:747.07px;color:#000;transform:scaleX(0.9664);">Modern Firearms.esp</span>
<span id="t175" class="t r c1" style="left:202.6px;top:747.07px;color:#000;">A.</span>
<span id="t176" class="t r" style="left:226.8px;top:747.07px;color:#000;">A7</span>
<span id="t177" class="t r d" style="left:374px;top:747.07px;color:#000;">22.03.2021 0:01:24</span>
<svg style="position:absolute;left:6px;top:764.60px" width="14" height="14" viewBox="0 0 14 14"><rect x="0.65" y="0.65" width="12.7" height="12.7" rx="0.3" fill="#c0fac0" stroke="#1e1e1e" stroke-width="1.3"/><path d="M2.9 7.4 Q3.4 9.4 4.5 10.4 Q7.5 6.6 11.3 3.1" fill="none" stroke="#005800" stroke-width="2.1" stroke-linecap="round" stroke-linejoin="round"/></svg>
<span id="t178" class="t r" style="left:22.3px;top:765.67px;color:#000;transform:scaleX(0.9539);">Weaponizer.esp</span>
<span id="t179" class="t r c1" style="left:202.6px;top:765.67px;color:#000;">A.</span>
<span id="t180" class="t r" style="left:226.8px;top:765.67px;color:#000;">A8</span>
<span id="t181" class="t r d" style="left:374px;top:765.67px;color:#000;">11.08.2019 22:53:06</span>
<svg style="position:absolute;left:6px;top:783.20px" width="14" height="14" viewBox="0 0 14 14"><rect x="0.65" y="0.65" width="12.7" height="12.7" rx="0.3" fill="#c0fac0" stroke="#1e1e1e" stroke-width="1.3"/><path d="M2.9 7.4 Q3.4 9.4 4.5 10.4 Q7.5 6.6 11.3 3.1" fill="none" stroke="#005800" stroke-width="2.1" stroke-linecap="round" stroke-linejoin="round"/></svg>
<span id="t182" class="t r" style="left:22.3px;top:784.27px;color:#25a82d;transform:scaleX(0.9222);">EAMR.esp</span>
<span id="t183" class="t r c1" style="left:202.6px;top:784.27px;color:#25a82d;">A.</span>
<span id="t184" class="t r" style="left:226.8px;top:784.27px;color:#25a82d;">A9</span>
<span id="t185" class="t r d" style="left:374px;top:784.27px;color:#25a82d;">26.02.2017 1:58:53</span>
<svg style="position:absolute;left:6px;top:801.80px" width="14" height="14" viewBox="0 0 14 14"><rect x="0.65" y="0.65" width="12.7" height="12.7" rx="0.3" fill="#c0fac0" stroke="#1e1e1e" stroke-width="1.3"/><path d="M2.9 7.4 Q3.4 9.4 4.5 10.4 Q7.5 6.6 11.3 3.1" fill="none" stroke="#005800" stroke-width="2.1" stroke-linecap="round" stroke-linejoin="round"/></svg>
<span id="t186" class="t r" style="left:22.3px;top:802.87px;color:#25a82d;transform:scaleX(0.9228);">Vivid Fallout - All in One - Best ...</span>
<span id="t187" class="t r c1" style="left:202.6px;top:802.87px;color:#25a82d;">A.</span>
<span id="t188" class="t r" style="left:226.8px;top:802.87px;color:#25a82d;">AA</span>
<span id="t189" class="t r d" style="left:374px;top:802.87px;color:#25a82d;">19.07.2017 4:26:04</span>
<svg style="position:absolute;left:6px;top:820.40px" width="14" height="14" viewBox="0 0 14 14"><rect x="0.65" y="0.65" width="12.7" height="12.7" rx="0.3" fill="#c0fac0" stroke="#1e1e1e" stroke-width="1.3"/><path d="M2.9 7.4 Q3.4 9.4 4.5 10.4 Q7.5 6.6 11.3 3.1" fill="none" stroke="#005800" stroke-width="2.1" stroke-linecap="round" stroke-linejoin="round"/></svg>
<span id="t190" class="t r" style="left:22.3px;top:821.47px;color:#000;transform:scaleX(0.9414);">NAC.esp</span>
<span id="t191" class="t r c1" style="left:202.6px;top:821.47px;color:#000;">A.</span>
<span id="t192" class="t r" style="left:226.8px;top:821.47px;color:#000;">AB</span>
<span id="t193" class="t r d" style="left:374px;top:821.47px;color:#000;">06.08.2020 4:42:52</span>
<svg style="position:absolute;left:6px;top:839.00px" width="14" height="14" viewBox="0 0 14 14"><rect x="0.65" y="0.65" width="12.7" height="12.7" rx="0.3" fill="#fffbc4" stroke="#1e1e1e" stroke-width="1.3"/><path d="M2.9 7.4 Q3.4 9.4 4.5 10.4 Q7.5 6.6 11.3 3.1" fill="none" stroke="#4c4a08" stroke-width="2.1" stroke-linecap="round" stroke-linejoin="round"/></svg>
<span id="t194" class="t r" style="left:22.3px;top:840.07px;color:#25a82d;transform:scaleX(0.9387);">NAC-FH.esp</span>
<span id="t195" class="t r c1" style="left:202.6px;top:840.07px;color:#25a82d;">A.</span>
<span id="t196" class="t r" style="left:226.8px;top:840.07px;color:#25a82d;">AC</span>
<span id="t197" class="t r d" style="left:374px;top:840.07px;color:#25a82d;">21.11.2019 19:22:46</span>
<svg style="position:absolute;left:6px;top:857.60px" width="14" height="14" viewBox="0 0 14 14"><rect x="0.65" y="0.65" width="12.7" height="12.7" rx="0.3" fill="#fffbc4" stroke="#1e1e1e" stroke-width="1.3"/><path d="M2.9 7.4 Q3.4 9.4 4.5 10.4 Q7.5 6.6 11.3 3.1" fill="none" stroke="#4c4a08" stroke-width="2.1" stroke-linecap="round" stroke-linejoin="round"/></svg>
<span id="t198" class="t r" style="left:22.3px;top:858.67px;color:#25a82d;transform:scaleX(0.9377);">NAC-NW.esp</span>
<span id="t199" class="t r c1" style="left:202.6px;top:858.67px;color:#25a82d;">A.</span>
<span id="t200" class="t r" style="left:226.8px;top:858.67px;color:#25a82d;">AD</span>
<span id="t201" class="t r d" style="left:374px;top:858.67px;color:#25a82d;">21.11.2019 23:11:34</span>
<svg style="position:absolute;left:6px;top:876.20px" width="14" height="14" viewBox="0 0 14 14"><rect x="0.65" y="0.65" width="12.7" height="12.7" rx="0.3" fill="#c0fac0" stroke="#1e1e1e" stroke-width="1.3"/><path d="M2.9 7.4 Q3.4 9.4 4.5 10.4 Q7.5 6.6 11.3 3.1" fill="none" stroke="#005800" stroke-width="2.1" stroke-linecap="round" stroke-linejoin="round"/></svg>
<span id="t202" class="t r" style="left:22.3px;top:877.27px;color:#000;transform:scaleX(0.9756);">Tactical Flashlights.esp</span>
<span id="t203" class="t r c1" style="left:202.6px;top:877.27px;color:#000;">A.</span>
<span id="t204" class="t r" style="left:226.8px;top:877.27px;color:#000;">AE</span>
<span id="t205" class="t r d" style="left:374px;top:877.27px;color:#000;">05.11.2016 14:01:14</span>
<div style="left:1.5px;top:894.10px;width:484px;height:17.00px;border:1px dotted #444;box-sizing:border-box;"></div>
<svg style="position:absolute;left:6px;top:894.80px" width="14" height="14" viewBox="0 0 14 14"><rect x="0.65" y="0.65" width="12.7" height="12.7" rx="0.3" fill="#c0fac0" stroke="#1e1e1e" stroke-width="1.3"/><path d="M2.9 7.4 Q3.4 9.4 4.5 10.4 Q7.5 6.6 11.3 3.1" fill="none" stroke="#005800" stroke-width="2.1" stroke-linecap="round" stroke-linejoin="round"/></svg>
<span id="t206" class="t r" style="left:22.3px;top:895.87px;color:#25a82d;transform:scaleX(0.9579);">Tactical Flashlights - Settings....</span>
<span id="t207" class="t r c1" style="left:202.6px;top:895.87px;color:#25a82d;">B.</span>
<span id="t208" class="t r" style="left:226.8px;top:895.87px;color:#25a82d;">AF</span>
<span id="t209" class="t r d" style="left:374px;top:895.87px;color:#25a82d;">05.11.2016 14:01:16</span>
<svg style="position:absolute;left:6px;top:913.40px" width="14" height="14" viewBox="0 0 14 14"><rect x="0.65" y="0.65" width="12.7" height="12.7" rx="0.3" fill="#c0fac0" stroke="#1e1e1e" stroke-width="1.3"/><path d="M2.9 7.4 Q3.4 9.4 4.5 10.4 Q7.5 6.6 11.3 3.1" fill="none" stroke="#005800" stroke-width="2.1" stroke-linecap="round" stroke-linejoin="round"/></svg>
<span id="t210" class="t r" style="left:22.3px;top:914.47px;color:#3399ff;transform:scaleX(0.9605);">Bashed Patch, 0.esp</span>
<span id="t211" class="t r c1" style="left:202.6px;top:914.47px;color:#3399ff;">B.</span>
<span id="t212" class="t r" style="left:226.8px;top:914.47px;color:#3399ff;">B0</span>
<span id="t213" class="t r d" style="left:374px;top:914.47px;color:#3399ff;">01.02.2020 23:03:56</span>
<div style="left:196.4px;top:0px;width:1px;height:935px;background:rgba(198,215,238,0.3);"></div>
<div style="left:220.3px;top:0px;width:1px;height:935px;background:rgba(198,215,238,0.3);"></div>
<div style="left:269.3px;top:0px;width:1px;height:935px;background:rgba(198,215,238,0.3);"></div>
<div style="left:367.2px;top:0px;width:1px;height:935px;background:rgba(198,215,238,0.3);"></div>
</div>
<div style="left:488px;top:74.5px;width:17px;height:960.5px;background:#f0f0f0;"></div>
<div style="left:488px;top:758px;width:14.8px;height:259px;background:#cdcdcd;"></div>
<svg style="position:absolute;left:489.5px;top:79px" width="12" height="9" viewBox="0 0 12 9"><path d="M2.6 7.2 L6 3.6 L9.4 7.2" fill="none" stroke="#606060" stroke-width="1.9"/></svg>
<svg style="position:absolute;left:489.5px;top:1021.5px" width="12" height="9" viewBox="0 0 12 9"><path d="M2.6 1.8 L6 5.4 L9.4 1.8" fill="none" stroke="#606060" stroke-width="1.9"/></svg>
<div style="left:6px;top:1035px;width:499px;height:15.5px;background:#f0f0f0;"></div>
<div style="left:24px;top:1035px;width:297px;height:14.8px;background:#cdcdcd;"></div>
<svg style="position:absolute;left:10px;top:1036.5px" width="9" height="12" viewBox="0 0 9 12"><path d="M6.6 2.6 L3.2 6 L6.6 9.4" fill="none" stroke="#606060" stroke-width="1.9"/></svg>
<svg style="position:absolute;left:474.5px;top:1036.5px" width="9" height="12" viewBox="0 0 9 12"><path d="M2.4 2.6 L5.8 6 L2.4 9.4" fill="none" stroke="#606060" stroke-width="1.9"/></svg>
<div style="left:1126.5px;top:72.5px;width:1px;height:981px;background:#e3e3e3;"></div>
<span id="t214" class="t " style="left:510.3px;top:75.14px;font-size:12px;line-height:13.8px;color:#000;transform:scaleX(0.9439);">Файл:</span>
<span id="t215" class="t " style="left:1099.6px;top:74.74px;font-size:12px;line-height:13.8px;color:#000;transform:scaleX(0.8890);">v0.95</span>
<div style="left:510px;top:92.9px;width:615.6px;height:21.8px;background:#fff;border:1px solid #7a7a7a;box-sizing:border-box;"></div>
<span id="t216" class="t " style="left:516.3px;top:98.44px;font-size:12px;line-height:13.8px;color:#000;transform:scaleX(0.9452);">Tactical Flashlights - Settings.esp</span>
<span id="t217" class="t " style="left:510.3px;top:121.14px;font-size:12px;line-height:13.8px;color:#000;transform:scaleX(0.9400);">Автор:</span>
<div style="left:510px;top:138.9px;width:615.6px;height:21.8px;background:#fff;border:1px solid #7a7a7a;box-sizing:border-box;"></div>
<span id="t218" class="t " style="left:516.3px;top:144.44px;font-size:12px;line-height:13.8px;color:#000;transform:scaleX(0.9273);">AKcelsior</span>
<span id="t219" class="t " style="left:510.3px;top:167.14px;font-size:12px;line-height:13.8px;color:#000;transform:scaleX(0.9462);">Изменен:</span>
<div style="left:510px;top:184.9px;width:615.6px;height:21.8px;background:#fff;border:1px solid #7a7a7a;box-sizing:border-box;"></div>
<span id="t220" class="t " style="left:516.3px;top:190.44px;font-size:12px;line-height:13.8px;color:#000;transform:scaleX(0.8881);">05.11.2016 14:01:16</span>
<span id="t221" class="t " style="left:510.3px;top:213.14px;font-size:12px;line-height:13.8px;color:#000;transform:scaleX(0.9394);">Описание:</span>
<div style="left:510px;top:231.3px;width:615.6px;height:92.4px;background:#fff;border:1px solid #7a7a7a;box-sizing:border-box;"></div>
<div style="left:1108px;top:232.3px;width:16.4px;height:90.4px;background:#f0f0f0;"></div>
<svg style="position:absolute;left:1110px;top:237px" width="12" height="9" viewBox="0 0 12 9"><path d="M2 7 L6 3 L10 7" fill="none" stroke="#bdbdbd" stroke-width="1.9"/></svg>
<svg style="position:absolute;left:1110px;top:310px" width="12" height="9" viewBox="0 0 12 9"><path d="M2 2 L6 6 L10 2" fill="none" stroke="#bdbdbd" stroke-width="1.9"/></svg>
<span id="t222" class="t " style="left:513.3px;top:235.44px;font-size:12px;line-height:13.8px;color:#000;transform:scaleX(0.9684);">Long I stood there, wondering, fearing.</span>
<span id="t223" class="t " style="left:510.5px;top:330.14px;font-size:12px;line-height:13.8px;color:#000;transform:scaleX(0.9552);">Мастер-файлы:</span>
<span id="t224" class="t " style="left:750.9px;top:330.14px;font-size:12px;line-height:13.8px;color:#000;transform:scaleX(0.9168);">Теги Wrye Bash:</span>
<div style="left:510px;top:348px;width:236.5px;height:678px;background:#fff;border:1px solid #c8c9ce;box-sizing:border-box;"></div>
<div style="left:540.1px;top:349px;width:1px;height:24px;background:#e5e5e5;"></div>
<div style="left:540.1px;top:373px;width:1px;height:652px;background:#eef3fa;"></div>
<div style="left:569.7px;top:349px;width:1px;height:24px;background:#e5e5e5;"></div>
<div style="left:569.7px;top:373px;width:1px;height:652px;background:#eef3fa;"></div>
<span id="t225" class="t " style="left:517.9px;top:354.94px;font-size:12px;line-height:13.8px;color:#000;transform:scaleX(0.8941);">Ф...</span>
<svg style="position:absolute;left:552px;top:356px" width="11" height="8" viewBox="0 0 11 8"><path d="M1 7 L5.5 1.2 L10 7 Z" fill="#000"/></svg>
<span id="t226" class="t " style="left:577px;top:354.94px;font-size:12px;line-height:13.8px;color:#000;transform:scaleX(0.9821);">Текущий ПЗ</span>
<svg style="position:absolute;left:516.5px;top:375.00px" width="14" height="14" viewBox="0 0 14 14"><rect x="0.65" y="0.65" width="12.7" height="12.7" rx="0.3" fill="#b8d8f8" stroke="#1e1e1e" stroke-width="1.3"/><path d="M2.9 7.4 Q3.4 9.4 4.5 10.4 Q7.5 6.6 11.3 3.1" fill="none" stroke="#123a8c" stroke-width="2.1" stroke-linecap="round" stroke-linejoin="round"/></svg>
<svg style="position:absolute;left:516.5px;top:393.60px" width="14" height="14" viewBox="0 0 14 14"><rect x="0.65" y="0.65" width="12.7" height="12.7" rx="0.3" fill="#c0fac0" stroke="#1e1e1e" stroke-width="1.3"/><path d="M2.9 7.4 Q3.4 9.4 4.5 10.4 Q7.5 6.6 11.3 3.1" fill="none" stroke="#005800" stroke-width="2.1" stroke-linecap="round" stroke-linejoin="round"/></svg>
<div style="left:533px;top:370px;width:6px;height:40px;overflow:hidden;">
<span class="t r" style="left:0.6px;top:4.70px;color:#1c1cf0">F</span>
<span class="t r" style="left:0.6px;top:23.30px;color:#000">1</span>
</div>
<span class="t r" style="left:547.5px;top:375.40px;color:#1c1cf0">00</span>
<span class="t r" style="left:576.7px;top:375.40px;color:#1c1cf0">00</span>
<span class="t r" style="left:547.5px;top:394.00px;color:#000">01</span>
<span class="t r" style="left:576.7px;top:394.00px;color:#000">AF</span>
<div style="left:750.2px;top:348px;width:375.5px;height:703.5px;background:#f0f0f0;border:1px solid #828282;box-sizing:border-box;"></div>
<div style="left:751px;top:1049.5px;width:374px;height:1px;background:#fff;"></div>
<div style="left:1123.5px;top:349px;width:1px;height:701px;background:#fff;"></div>
<svg style="position:absolute;left:1110px;top:353px" width="12" height="9" viewBox="0 0 12 9"><path d="M2 7 L6 3 L10 7" fill="none" stroke="#bdbdbd" stroke-width="1.9"/></svg>
<svg style="position:absolute;left:1109.5px;top:1038.5px" width="12" height="9" viewBox="0 0 12 9"><path d="M2 2 L6 6 L10 2" fill="none" stroke="#bdbdbd" stroke-width="1.9"/></svg>
<div style="left:1107px;top:349px;width:1.5px;height:700.5px;background:#f9f9f9;"></div>
<div style="left:511px;top:1031.2px;width:75.60000000000002px;height:20.4px;background:#cccccc;border:1px solid #bfbfbf;box-sizing:border-box;"></div>
<span id="t227" class="t " style="left:519.8px;top:1035.94px;font-size:12px;line-height:13.8px;color:#838383;transform:scaleX(0.9591);">Сохранить</span>
<div style="left:593.2px;top:1031.2px;width:70.89999999999998px;height:20.4px;background:#cccccc;border:1px solid #bfbfbf;box-sizing:border-box;"></div>
<span id="t228" class="t " style="left:607.9px;top:1035.94px;font-size:12px;line-height:13.8px;color:#838383;transform:scaleX(0.9358);">Отмена</span>
<div style="left:1px;top:1053.5px;width:1129px;height:1px;background:#fff;"></div>
<div style="left:1px;top:1054.5px;width:1129px;height:3.5px;background:#e3e3e3;"></div>
<div style="left:174px;top:1058px;width:1px;height:20px;background:#dadada;"></div>
<div style="left:827.8px;top:1058px;width:1px;height:20px;background:#dadada;"></div>
<span id="t229" class="t " style="left:832.8px;top:1062.94px;font-size:12px;line-height:13.8px;color:#000;transform:scaleX(0.9058);">Моды: 178/178 (ESP/M: 177, ESL: 1)</span>
<div style="left:1126px;top:1075px;width:2px;height:2px;background:#b4b4b4;"></div>
<div style="left:1123px;top:1075px;width:2px;height:2px;background:#b4b4b4;"></div>
<div style="left:1120px;top:1075px;width:2px;height:2px;background:#b4b4b4;"></div>
<div style="left:1126px;top:1072px;width:2px;height:2px;background:#b4b4b4;"></div>
<div style="left:1123px;top:1072px;width:2px;height:2px;background:#b4b4b4;"></div>
<div style="left:1126px;top:1069px;width:2px;height:2px;background:#b4b4b4;"></div>
<svg style="position:absolute;left:6px;top:1062.00px" width="14" height="14" viewBox="0 0 14 14"><rect x="0.65" y="0.65" width="12.7" height="12.7" rx="0.3" fill="#c0fac0" stroke="#1e1e1e" stroke-width="1.3"/><path d="M2.9 7.4 Q3.4 9.4 4.5 10.4 Q7.5 6.6 11.3 3.1" fill="none" stroke="#005800" stroke-width="2.1" stroke-linecap="round" stroke-linejoin="round"/></svg>
<div style="left:29.2px;top:1062px;width:13.6px;height:14px;background:#ff9898;border:1.5px solid #222;border-radius:1px;box-sizing:border-box;"></div>
<svg style="position:absolute;left:51px;top:1060px" width="18" height="18" viewBox="0 0 18 18">
<rect x="0" y="0" width="18" height="18" fill="#fbfbfb"/>
<circle cx="9" cy="9" r="8.2" fill="#2f8ef2"/>
<path d="M13.5 1.6 L15.8 3.2 L10.5 9 L14 9.2 L4.2 16.6 L2.2 15 L7.6 9.4 L4.2 9 Z" fill="#f4de3a"/>
<ellipse cx="9.2" cy="9.4" rx="3.9" ry="4.4" fill="#f6e6cc" stroke="#8a6a3a" stroke-width="0.7"/>
<path d="M6 6.2 Q9 3.2 12.4 6 L12 7.2 Q9 5.4 6.3 7.4 Z" fill="#e8c860"/>
<path d="M7.3 11.4 Q9.2 12.8 11.2 11.2" fill="none" stroke="#6a4a2a" stroke-width="0.7"/>
<circle cx="7.8" cy="8.8" r="0.5" fill="#333"/><circle cx="10.6" cy="8.8" r="0.5" fill="#333"/></svg>
<svg style="position:absolute;left:76px;top:1060px" width="15" height="18" viewBox="0 0 15 18">
<defs><linearGradient id="dg" x1="0" y1="0" x2="0" y2="1"><stop offset="0" stop-color="#e2c890"/><stop offset="1" stop-color="#f4e6c4"/></linearGradient></defs>
<path d="M1 0.8 L9.6 0.8 L14 5.2 L14 17.2 L1 17.2 Z" fill="url(#dg)" stroke="#c8aa70" stroke-width="0.7"/>
<path d="M9.6 0.8 L9.6 5.2 L14 5.2" fill="#f8eed8" stroke="#c8aa70" stroke-width="0.6"/>
<text x="0.4" y="12.6" font-family="Liberation Sans" font-weight="bold" font-size="7" fill="#3a3a3a" textLength="14" lengthAdjust="spacingAndGlyphs">Doc</text></svg>
<svg style="position:absolute;left:98px;top:1060px" width="18" height="18" viewBox="0 0 18 18">
<rect x="1.2" y="1.2" width="11.5" height="16" fill="#f4f8fc" stroke="#c8d0d8" stroke-width="0.8"/>
<path d="M2.6 5.2 L3.6 6.2 L5.2 4.2" fill="none" stroke="#3cb040" stroke-width="1.1"/>
<path d="M2.6 9.2 L3.6 10.2 L5.2 8.2" fill="none" stroke="#3cb040" stroke-width="1.1"/>
<path d="M2.8 12.8 L4.8 14.8 M4.8 12.8 L2.8 14.8" stroke="#e03030" stroke-width="1.1"/>
<path d="M7 13.2 L14.6 4 L17 6 L9.4 15.2 Z" fill="#f2c040" stroke="#c08a20" stroke-width="0.5"/>
<path d="M14.6 4 L15.6 2.8 L18 4.8 L17 6 Z" fill="#e84040"/>
<path d="M7 13.2 L9.4 15.2 L6.4 16.2 Z" fill="#e8d0a0"/></svg>
<svg style="position:absolute;left:121.5px;top:1060.5px" width="16" height="17" viewBox="0 0 16 17">
<defs><radialGradient id="gg" cx="0.4" cy="0.35" r="0.7"><stop offset="0" stop-color="#b0b8ff"/><stop offset="1" stop-color="#5a64d0"/></radialGradient></defs>
<g transform="translate(8 8.5)"><path d="M-1.3 -7.6 L1.3 -7.6 L1.8 -5.9 L3.4 -5.2 L4.9 -6.1 L6.2 -4.4 L5.3 -2.9 L5.9 -1.2 L7.6 -0.8 L7.6 1.6 L5.9 2 L5.2 3.6 L6 5.2 L4.2 6.6 L2.9 5.5 L1.2 6.1 L0.8 7.6 L-1.6 7.6 L-2 5.9 L-3.6 5.2 L-5.2 6 L-6.6 4.2 L-5.5 2.9 L-6.1 1.2 L-7.6 0.8 L-7.6 -1.6 L-5.9 -2 L-5.2 -3.6 L-6 -5.2 L-4.2 -6.6 L-2.9 -5.5 L-1.6 -5.9 Z" fill="url(#gg)" stroke="#5860c8" stroke-width="0.4"/>
<circle r="3.5" fill="#eef0fa" stroke="#6a72d8" stroke-width="0.7"/></g></svg>
<svg style="position:absolute;left:145px;top:1060px" width="18" height="18" viewBox="0 0 18 18">
<defs><radialGradient id="hg" cx="0.45" cy="0.35" r="0.7"><stop offset="0" stop-color="#4a78c8"/><stop offset="1" stop-color="#1c3a80"/></radialGradient></defs>
<circle cx="9" cy="9" r="8.3" fill="url(#hg)" stroke="#8aa0c8" stroke-width="0.8"/>
<circle cx="9" cy="9" r="7.2" fill="none" stroke="#20356e" stroke-width="0.6"/>
<path d="M6.6 7.1 C6.6 4.6 11.4 4.6 11.4 7.1 C11.4 8.7 9.1 8.9 9.1 10.9" fill="none" stroke="#fff" stroke-width="1.7"/><circle cx="9.1" cy="13.4" r="1.05" fill="#fff"/></svg></body></html>
